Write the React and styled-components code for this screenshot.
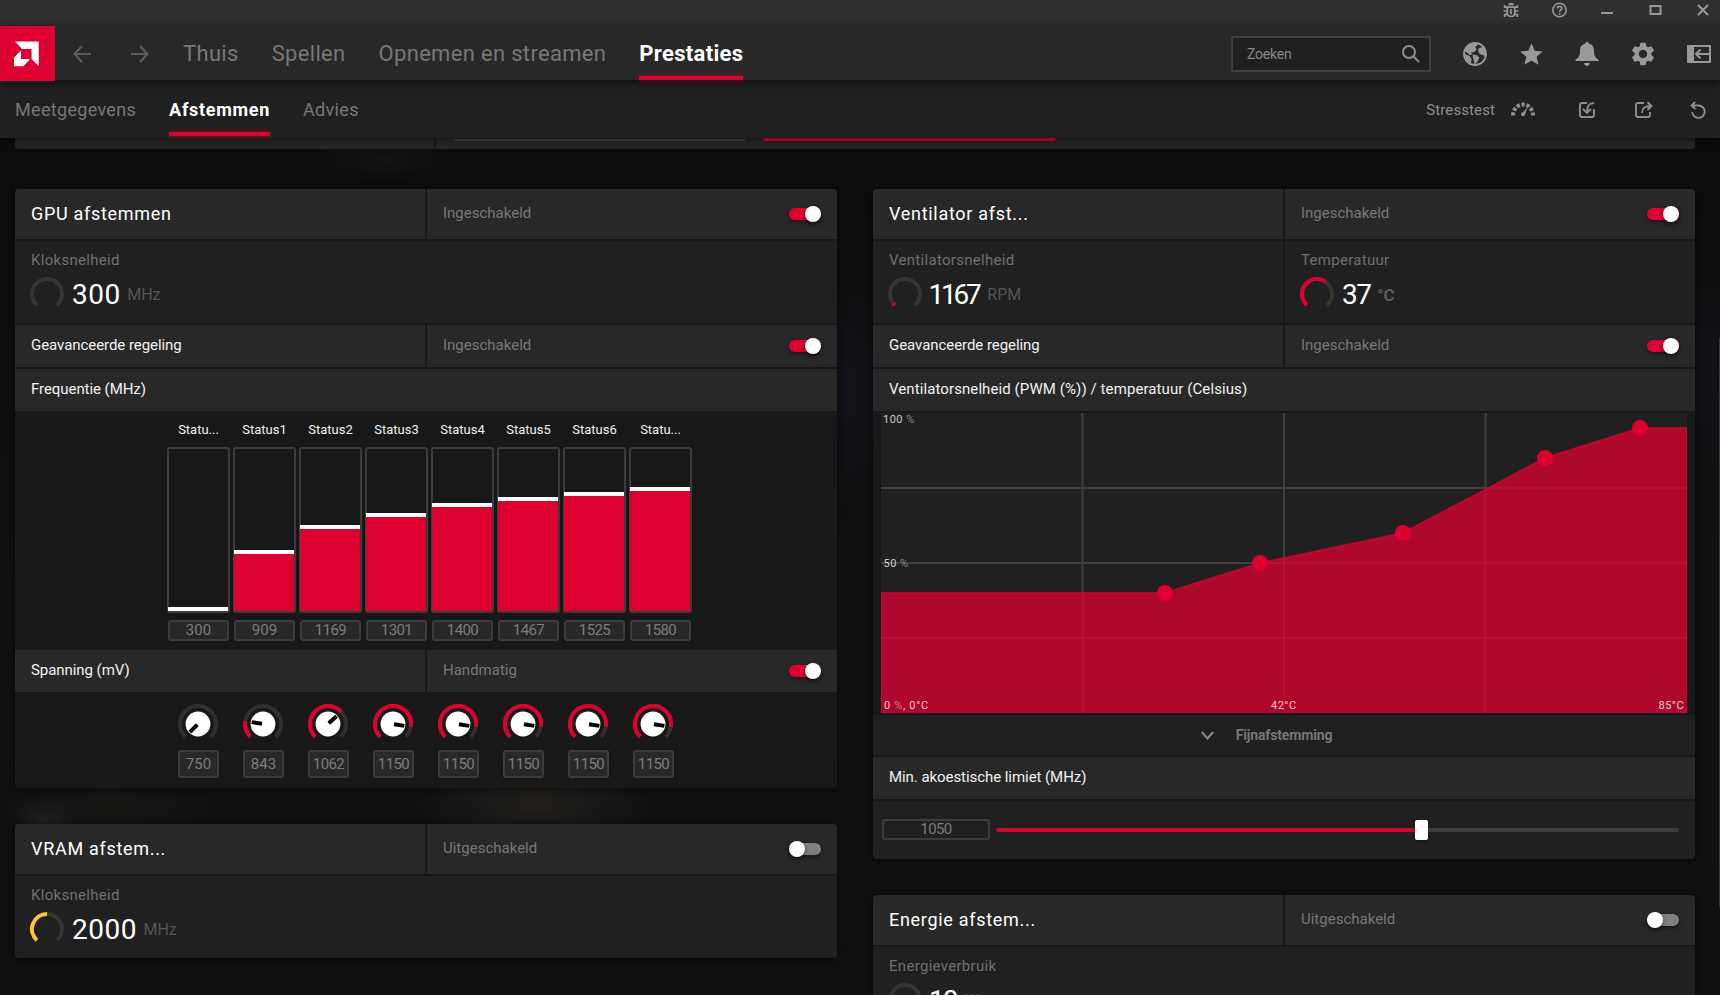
import React, { Component } from 'react';
import styled, { createGlobalStyle } from 'styled-components';
import { MdStar, MdSettings } from 'react-icons/md';

const RED = '#de0031';
const ARC_SWEEP = 270;
const VOLT_MIN = 750;
const VOLT_RANGE = 461;

const frequencies = [
    { label: 'Statu...', value: 300, level: 0 },
    { label: 'Status1', value: 909, level: 57 },
    { label: 'Status2', value: 1169, level: 82 },
    { label: 'Status3', value: 1301, level: 94 },
    { label: 'Status4', value: 1400, level: 104 },
    { label: 'Status5', value: 1467, level: 110 },
    { label: 'Status6', value: 1525, level: 115 },
    { label: 'Statu...', value: 1580, level: 120 },
];
const voltages = [750, 843, 1062, 1150, 1150, 1150, 1150, 1150];
const fanPoints = [[284, 180], [379, 150], [522, 120], [664, 45], [759, 15]];

// point on a circle, angle in degrees clockwise from the top
const polar = (c, r, angle) => {
    const a = (angle * Math.PI) / 180;
    return [c + r * Math.sin(a), c - r * Math.cos(a)];
};
const arcPath = (c, r, from, to) => {
    const [x1, y1] = polar(c, r, from);
    const [x2, y2] = polar(c, r, to);
    return `M${x1} ${y1}A${r} ${r} 0 ${to - from > 180 ? 1 : 0} 1 ${x2} ${y2}`;
};

const Ring = ({ value = 0, color = RED }) => (
    <svg width="34" height="34" fill="none" strokeWidth="4">
        <path d={arcPath(17, 15, -138, 138)} stroke="#353535" />
        {value > 0 && <path d={arcPath(17, 15, -138, -138 + 276 * value)} stroke={color} />}
    </svg>
);

const Knob = ({ value }) => {
    const angle = -135 + (ARC_SWEEP * (value - VOLT_MIN)) / VOLT_RANGE;
    const [x1, y1] = polar(20, 1, angle);
    const [x2, y2] = polar(20, 11.5, angle);
    return (
        <svg width="40" height="36" fill="none" strokeWidth="4">
            <path d={arcPath(20, 18, -135, 135)} stroke="#2f2f2f" />
            {value > VOLT_MIN && <path d={arcPath(20, 18, -135, angle)} stroke={RED} />}
            <circle cx="20" cy="20" r="12.4" fill="#fff" />
            <path d={`M${x1} ${y1}L${x2} ${y2}`} stroke="#000" />
        </svg>
    );
};

const FanChart = () => {
    const line = fanPoints.map((p) => p.join(' ')).join('L');
    return (
        <Chart width="806" height="300" viewBox="0 0 806 300">
            <rect width="806" height="300" fill="#202020" />
            <path d="M201.5 0V300M403 0V300M604.5 0V300M0 75H806M0 150H806M0 225H806" stroke="#404040" strokeWidth="2" />
            <path
                d={`M0 180L${line}L806 15V299.5H0Z`}
                fill="rgba(222, 0, 49, 0.75)"
                stroke="rgba(222, 0, 49, 0.7)"
                strokeWidth="2"
            />
            {fanPoints.map(([x, y]) => <circle key={x} cx={x} cy={y} r="8" fill={RED} />)}
            <text x="2" y="10">100 <tspan className="dim">%</tspan></text>
            <text x="2.5" y="153.5">50 <tspan className="dim">%</tspan></text>
            <text x="3" y="296" letterSpacing="0.7">0 <tspan className="dim">%</tspan>, 0°C</text>
            <text x="390" y="296">42°C</text>
            <text x="777.5" y="296">85°C</text>
        </Chart>
    );
};

const Switch = ({ on }) => <Track $on={on}><Thumb /></Track>;

const CardHead = ({ title, status, on }) => (
    <Split>
        <HeadCell><Title>{title}</Title></HeadCell>
        <HeadCell><Status>{status}</Status><Switch on={on} /></HeadCell>
    </Split>
);

const SubHead = ({ title, status }) => (
    <Split>
        <SubCell><SubTitle>{title}</SubTitle></SubCell>
        <SubCell><Status>{status}</Status><Switch on /></SubCell>
    </Split>
);

const Metric = ({ label, value, unit, ring, color, track = 0.5, nudge = 0, strong }) => (
    <MetricCell>
        <MetricLabel>{label}</MetricLabel>
        <Reading>
            <Ring value={ring} color={color} />
            <Value $track={track} $nudge={nudge}>{value}</Value>
            <Unit $strong={strong}>{unit}</Unit>
        </Reading>
    </MetricCell>
);

export default class App extends Component {
    renderTitleBar() {
        return (
            <TitleBar>
                <svg width="16" height="18" viewBox="0 0 16 18" fill="none" stroke="#999" strokeWidth="1.7">
                    <path d="M5 4.2C5 1 11 1 11 4.2Z" fill="#999" stroke="none" />
                    <path d="M4.3 6.2h7.4v6.2c0 4-7.4 4-7.4 0ZM8 8v5M.5 10h3.5M12 10h3.5M1.6 4v2.2h2.5M14.4 4v2.2h-2.5M1.6 16v-2.3l2.8-.6M14.4 16v-2.3l-2.8-.6" />
                </svg>
                <svg width="15" height="18" viewBox="0.5 0 15 18" fill="none" stroke="#999" strokeWidth="1.6">
                    <circle cx="8" cy="9" r="6.7" />
                    <path d="M5.8 7.6c0-3 4.5-2.8 4.5-.2 0 1.6-2.2 1.6-2.2 3.3M8.1 11.9v1.8" />
                </svg>
                <svg width="16" height="18" fill="none" stroke="#999" strokeWidth="2"><path d="M1 12h12" /></svg>
                <svg width="14" height="18" fill="none" stroke="#999" strokeWidth="2"><path d="M1.5 5h10v8h-10Z" /></svg>
                <svg width="14" height="18" fill="none" stroke="#999" strokeWidth="2"><path d="M2 4l10 10M12 4L2 14" /></svg>
            </TitleBar>
        );
    }
    renderNav() {
        return (
            <NavBar>
                <Logo>
                    <svg width="25" height="26" fill="#fff">
                        <path d="M1 .5H24.7V25L17.5 18V8H8Z" />
                        <path d="M7 9.5V18H16L9.5 25.3H0V16.5Z" />
                    </svg>
                </Logo>
                <History>
                    <svg width="18" height="18" fill="none" stroke="#5c5c5c" strokeWidth="2.2"><path d="M18 9H2M9 1L1.5 9L9 17" /></svg>
                    <svg width="18" height="18" fill="none" stroke="#5c5c5c" strokeWidth="2.2"><path d="M0 9H16M9 1L16.5 9L9 17" /></svg>
                </History>
                <Tabs>
                    <Tab>Thuis</Tab>
                    <Tab>Spellen</Tab>
                    <Tab>Opnemen en streamen</Tab>
                    <Tab $active>Prestaties</Tab>
                </Tabs>
                <Search>
                    Zoeken
                    <svg width="18" height="18" fill="none" stroke="#8e8e8e" strokeWidth="2"><circle cx="7" cy="7" r="6" /><path d="M11.3 11.3L17 17" /></svg>
                </Search>
                <NavIcons>
                    <svg width="24" height="24" fill="currentColor">
                        <circle cx="12" cy="12" r="11" fill="none" stroke="currentColor" strokeWidth="1.8" />
                        <path d="M1.5 9C3 4 7.500 1 12 1l3 2-3 2.200 1.800 2.300-3 2.800-2.800.2 1 2L6.500 13 4 10.500Z" />
                        <path d="M2 12l4.500 2 2 3-.5 4.500C4.500 20 2 16.500 2 12Z" />
                        <path d="M9.500 12.500l4.500.7 2.500 2.600-2.300 4-2.400 3-1-4Z" />
                        <path d="M15.500 6.500L20 4.500l3 5-.4 5.500-2.600-2-3-.8-1.800-2.700Z" />
                    </svg>
                    <MdStar size={27} />
                    <svg width="24" height="24" fill="currentColor">
                        <path d="M12 0c1.3 0 1.8.8 1.9 1.8C18 2.7 19 5.5 19 9c0 5 1.5 6.8 4.5 8.6V19H.5v-1.4C3.5 15.8 5 14 5 9c0-3.5 1-6.3 5.1-7.2C10.2.8 10.7 0 12 0Z" />
                        <path d="M9 21h6c-.4 2-1.5 3-3 3s-2.6-1-3-3Z" />
                    </svg>
                    <MdSettings size={28} />
                    <svg width="24" height="18" fill="none" stroke="currentColor" strokeWidth="2">
                        <path d="M0 0h7v18H0Z" fill="currentColor" stroke="none" />
                        <path d="M1 1h22v16H1ZM23 9H9M13.5 4.5L9 9l4.5 4.5" />
                    </svg>
                </NavIcons>
            </NavBar>
        );
    }
    renderSubNav() {
        return (
            <SubNav>
                <Tabs $small>
                    <Tab $small>Meetgegevens</Tab>
                    <Tab $small $active>Afstemmen</Tab>
                    <Tab $small>Advies</Tab>
                </Tabs>
                <Actions>
                    <Stress>
                        Stresstest
                        <svg width="24" height="16" fill="none" stroke="currentColor">
                            <path d="M2 14.5A10 11 0 0 1 22 14.5" strokeWidth="4" strokeDasharray="3.3 1.65" />
                            <path d="M10.2 13L16.5 6.5L13.7 14.5Z" fill="currentColor" stroke="none" />
                            <circle cx="12" cy="13.2" r="2" fill="currentColor" stroke="none" />
                        </svg>
                    </Stress>
                    <svg width="16" height="18" fill="none" stroke="currentColor" strokeWidth="1.9">
                        <path d="M8 2H3Q1 2 1 4v10q0 2 2 2h10q2 0 2-2V8" />
                        <path d="M15 2C10 2 8 4.5 8 11.500M4 8l4 4 4-4" />
                    </svg>
                    <svg width="18" height="18" fill="none" stroke="currentColor" strokeWidth="1.9">
                        <path d="M9 2H3Q1 2 1 4v10q0 2 2 2h10q2 0 2-2v-3" />
                        <path d="M7 12C7 7.5 9 5 16 5M12.5 1.2L16.5 5l-4 4" />
                    </svg>
                    <svg width="16" height="18" fill="none" stroke="currentColor" strokeWidth="1.9">
                        <path d="M1.5 4.5H8.5A6.2 6.2 0 1 1 2.3 11M5.2 .8L1.5 4.5L5.2 8.2" />
                    </svg>
                </Actions>
            </SubNav>
        );
    }
    renderGpu() {
        return (
            <Card>
                <CardHead title="GPU afstemmen" status="Ingeschakeld" on />
                <Metric label="Kloksnelheid" value="300" unit="MHz" />
                <SubHead title="Geavanceerde regeling" status="Ingeschakeld" />
                <SubCell><SubTitle>Frequentie (MHz)</SubTitle></SubCell>
                <Bars>
                    {frequencies.map((f) => (
                        <BarColumn key={f.value}>
                            <BarLabel>{f.label}</BarLabel>
                            <BarFrame><Bar style={{ height: f.level }} /></BarFrame>
                            <Field $narrow={String(f.value).startsWith('1')}>{f.value}</Field>
                        </BarColumn>
                    ))}
                </Bars>
                <SubHead title="Spanning (mV)" status="Handmatig" />
                <Knobs>
                    {voltages.map((v, i) => (
                        <KnobColumn key={i}>
                            <Knob value={v} />
                            <KnobField $narrow={v > 1000}>{v}</KnobField>
                        </KnobColumn>
                    ))}
                </Knobs>
            </Card>
        );
    }
    renderFan() {
        return (
            <Card>
                <CardHead title="Ventilator afst..." status="Ingeschakeld" on />
                <Split>
                    <Metric label="Ventilatorsnelheid" value="1167" unit="RPM" ring={0.03} track={-3.2} nudge={1.5} />
                    <Metric label="Temperatuur" value="37" unit="°C" ring={0.63} track={-1.5} strong />
                </Split>
                <SubHead title="Geavanceerde regeling" status="Ingeschakeld" />
                <SubCell><SubTitle $wide>Ventilatorsnelheid (PWM (%)) / temperatuur (Celsius)</SubTitle></SubCell>
                <FanChart />
                <FineTune>
                    <svg width="13" height="9" fill="none" stroke="#8a8a8a" strokeWidth="2"><path d="M.8 1L6.5 7.5L12.2 1" /></svg>
                    Fijnafstemming
                </FineTune>
                <SubCell><SubTitle>Min. akoestische limiet (MHz)</SubTitle></SubCell>
                <SliderRow>
                    <SliderField $narrow>1050</SliderField>
                    <Slider>
                        <SliderFill />
                        <SliderThumb />
                        <SliderRest />
                    </Slider>
                </SliderRow>
            </Card>
        );
    }
    render() {
        return (
            <Page>
                <GlobalStyle />
                {this.renderTitleBar()}
                {this.renderNav()}
                {this.renderSubNav()}
                <Main>
                    <Profile>
                        <ProfileCell />
                        <ProfileCell>
                            <Preset />
                            <Preset $active />
                        </ProfileCell>
                    </Profile>
                    <Columns>
                        <Column>
                            {this.renderGpu()}
                            <Card>
                                <CardHead title="VRAM afstem..." status="Uitgeschakeld" />
                                <Metric label="Kloksnelheid" value="2000" unit="MHz" ring={0.5} color="#ffc72c" />
                            </Card>
                        </Column>
                        <Column>
                            {this.renderFan()}
                            <Card>
                                <CardHead title="Energie afstem..." status="Uitgeschakeld" />
                                <Metric label="Energieverbruik" value="10" unit="W" track={-2} nudge={1} />
                            </Card>
                        </Column>
                    </Columns>
                </Main>
                <ScrollThumb />
            </Page>
        );
    }
}

const GlobalStyle = createGlobalStyle`
    * {
        box-sizing: border-box;
    }
    body {
        margin: 0;
        background: #0d0d0d;
        font-family: Roboto, "Liberation Sans", sans-serif;
    }
    svg {
        display: block;
        flex: none;
    }
`;
const Page = styled.div`
    position: relative;
    width: 1720px;
    height: 995px;
    overflow: hidden;
    display: flex;
    flex-direction: column;
    background:
        radial-gradient(ellipse 34px 20px at 45px 820px, #202020, transparent),
        radial-gradient(ellipse 110px 30px at 110px 806px, #191714, transparent),
        radial-gradient(ellipse 120px 55px at 535px 800px, #221f1b, transparent),
        radial-gradient(ellipse 80px 20px at 385px 160px, #141414, transparent),
        radial-gradient(ellipse 60px 120px at 850px 390px, #12141a, transparent),
        radial-gradient(ellipse 40px 120px at 1710px 370px, #111318, transparent),
        linear-gradient(#0c0c0c 15%, #101112 60%, #0f1012);
`;
const TitleBar = styled.div`
    flex: none;
    height: 26px;
    padding: 1px 10px 0 0;
    display: flex;
    justify-content: flex-end;
    gap: 33px;
    background: linear-gradient(#2e2e2e, #313131);
`;
const NavBar = styled.div`
    position: relative;
    z-index: 2;
    flex: none;
    height: 54px;
    display: flex;
    align-items: center;
    background: #282828;
    box-shadow: 0 2px 9px rgba(0, 0, 0, 0.65);
`;
const Logo = styled.div`
    align-self: flex-start;
    width: 55px;
    height: 55px;
    display: flex;
    align-items: center;
    justify-content: center;
    padding-right: 3px;
    background: ${RED};
`;
const History = styled.div`
    display: flex;
    gap: 40px;
    width: 128px;
    padding: 2px 0 0 18px;
`;
const Tabs = styled.div`
    display: flex;
    align-self: stretch;
    gap: 33px;
    margin-left: ${props => props.$small ? "15px" : "0"};
`;
const Tab = styled.div`
    display: flex;
    align-items: center;
    padding-top: ${props => props.$small ? "0" : "1px"};
    font-size: ${props => props.$small ? "18px" : "22px"};
    font-weight: ${props => props.$active ? 700 : 400};
    letter-spacing: ${props => props.$small && props.$active ? "0.7px" : "0.32px"};
    color: ${props => props.$active ? "#fff" : "#777"};
    position: relative;
    white-space: nowrap;
    &::after {
        content: "";
        display: ${props => props.$active ? "block" : "none"};
        position: absolute;
        left: 0;
        right: 0;
        bottom: ${props => props.$small ? "2px" : "0"};
        height: 4px;
        background: ${RED};
        box-shadow: 0 0 5px rgba(222, 0, 49, 0.6);
    }
`;
const Search = styled.div`
    width: 200px;
    height: 36px;
    margin: 2px 0 0 auto;
    padding: 0 9px 0 14px;
    display: flex;
    align-items: center;
    justify-content: space-between;
    border: 2px solid #404040;
    border-radius: 2px;
    background: #202020;
    color: #858585;
    font-size: 14px;
    letter-spacing: -0.2px;
`;
const NavIcons = styled.div`
    display: grid;
    grid-template-columns: repeat(5, 56px);
    place-items: center;
    padding-top: 2px;
    margin: 0 -7px 0 16px;
    color: #999;
`;
const SubNav = styled.div`
    position: relative;
    z-index: 1;
    flex: none;
    height: 58px;
    padding-right: 14px;
    display: flex;
    justify-content: space-between;
    background: #202020;
    box-shadow: 0 2px 8px rgba(0, 0, 0, 0.5);
`;
const Actions = styled.div`
    display: flex;
    align-items: center;
    gap: 40px;
    color: #8e8e8e;
    padding-top: 1px;
    & > svg:last-child {
        margin-left: -3px;
    }
`;
const Stress = styled.div`
    display: flex;
    align-items: center;
    gap: 16px;
    margin-right: 4px;
    color: #8e8e8e;
    font-size: 15px;
    letter-spacing: 0.1px;
    svg {
        margin-top: -2px;
    }
`;
const Main = styled.div`
    flex: 1;
    min-height: 0;
    padding: 0 25px 0 15px;
    overflow: hidden;
`;
const Profile = styled.div`
    height: 11px;
    display: grid;
    grid-template-columns: 419px 1fr;
    gap: 2px;
    margin-bottom: 40px;
    border-radius: 0 0 4px 4px;
    overflow: hidden;
    background: #191919;
`;
const ProfileCell = styled.div`
    display: flex;
    gap: 17px;
    padding-left: 17px;
    background: #262626;
`;
const Preset = styled.div`
    width: 293px;
    height: 3px;
    border-radius: 0 0 3px 3px;
    border-bottom: 2px solid ${props => props.$active ? RED : "#3c3c3c"};
    background: ${props => props.$active ? RED : "#202020"};
`;
const Columns = styled.div`
    display: grid;
    grid-template-columns: 822px 822px;
    gap: 36px;
    align-items: start;
`;
const Column = styled.div`
    display: flex;
    flex-direction: column;
    gap: 36px;
`;
const Card = styled.section`
    display: flex;
    flex-direction: column;
    gap: 2px;
    border-radius: 4px;
    overflow: hidden;
    background: #181818;
    box-shadow: 0 1px 8px rgba(0, 0, 0, 0.6);
`;
const Split = styled.div`
    display: grid;
    grid-template-columns: 1fr 1fr;
    gap: 2px;
`;
const HeadCell = styled.div`
    height: 50px;
    padding: 0 16px;
    display: flex;
    align-items: center;
    justify-content: space-between;
    background: #282828;
`;
const SubCell = styled(HeadCell)`
    height: 42px;
`;
const Title = styled.h2`
    margin: -2px 0 0;
    font-size: 18px;
    font-weight: 400;
    letter-spacing: 0.7px;
    color: #fff;
`;
const SubTitle = styled.h3`
    margin: -2px 0 0;
    font-size: 15px;
    font-weight: 400;
    letter-spacing: ${props => props.$wide ? "0.09px" : "-0.06px"};
    color: #f2f2f2;
`;
const Status = styled.span`
    margin-top: -2px;
    font-size: 15px;
    color: #777;
`;
const Track = styled.div`
    width: 32px;
    height: 12px;
    border-radius: 6px;
    display: flex;
    align-items: center;
    justify-content: ${props => props.$on ? "flex-end" : "flex-start"};
    background: ${props => props.$on ? RED : "#808080"};
    box-shadow: 0 2px 4px rgba(0, 0, 0, 0.4);
`;
const Thumb = styled.div`
    width: 16px;
    height: 16px;
    flex: none;
    border-radius: 50%;
    background: #fff;
    box-shadow: 0 2px 4px rgba(0, 0, 0, 0.5);
`;
const MetricCell = styled.div`
    height: 82px;
    padding: 10px 15px 0;
    background: #202020;
`;
const MetricLabel = styled.div`
    padding-left: 1px;
    font-size: 15px;
    line-height: 18px;
    letter-spacing: 0.3px;
    color: #6f6f6f;
`;
const Reading = styled.div`
    display: flex;
    align-items: center;
    height: 34px;
    margin-top: 8px;
`;
const Value = styled.div`
    margin-left: ${props => 8 - props.$nudge}px;
    margin-right: ${props => 7 - props.$track - props.$nudge}px;
    font-size: 28px;
    letter-spacing: ${props => props.$track}px;
    color: #fff;
`;
const Unit = styled.div`
    padding-top: 1px;
    margin-left: ${props => props.$strong ? "-2px" : "0"};
    font-size: ${props => props.$strong ? "17px" : "16px"};
    font-weight: ${props => props.$strong ? 700 : 400};
    color: ${props => props.$strong ? "#5c5c5c" : "#555"};
`;
const Bars = styled.div`
    height: 235px;
    padding: 9px 0 0 152px;
    display: flex;
    gap: 3px;
`;
const BarColumn = styled.div`
    width: 63px;
    display: flex;
    flex-direction: column;
    align-items: center;
`;
const BarLabel = styled.div`
    height: 25px;
    font-size: 13px;
    line-height: 16px;
    color: #f2f2f2;
`;
const BarFrame = styled.div`
    width: 63px;
    height: 166px;
    padding: 0 2px 2px 1px;
    display: flex;
    flex-direction: column;
    justify-content: flex-end;
    border-radius: 3px;
    box-shadow: inset 0 0 0 2px #3c3c3c;
`;
const Bar = styled.div`
    box-sizing: content-box;
    border-top: 4px solid #fff;
    background: ${RED};
`;
const Field = styled.div`
    width: 61px;
    height: 21px;
    margin-top: 7px;
    padding-bottom: 1px;
    display: flex;
    align-items: center;
    justify-content: center;
    border: 2px solid #3c3c3c;
    border-radius: 3px;
    background: #282828;
    color: #7c7c7c;
    font-size: 15px;
    letter-spacing: ${props => props.$narrow ? "-0.6px" : "0"};
`;
const Knobs = styled.div`
    height: 94px;
    padding: 10px 0 0 163px;
    display: flex;
    gap: 25px;
`;
const KnobColumn = styled.div`
    width: 40px;
`;
const KnobField = styled(Field)`
    width: 41px;
    height: 28px;
    margin-top: 10px;
`;
const Chart = styled.svg`
    margin: 0 8px;
    font-size: 11px;
    letter-spacing: 0.5px;
    text {
        fill: rgba(255, 255, 255, 0.78);
    }
    .dim {
        fill: rgba(255, 255, 255, 0.45);
    }
`;
const FineTune = styled.div`
    height: 40px;
    padding-right: 35px;
    display: flex;
    align-items: center;
    justify-content: center;
    gap: 22px;
    background: #202020;
    color: #757575;
    font-size: 14px;
    font-weight: 700;
    letter-spacing: -0.15px;
`;
const SliderRow = styled.div`
    height: 58px;
    padding: 0 16px 0 9px;
    display: flex;
    align-items: center;
    gap: 6px;
    background: #202020;
`;
const SliderField = styled(Field)`
    width: 108px;
    margin-top: -1px;
    background: #202020;
`;
const Slider = styled.div`
    flex: 1;
    display: flex;
    align-items: center;
`;
const SliderFill = styled.div`
    width: 419px;
    height: 4px;
    border-radius: 2px 0 0 2px;
    background: ${RED};
`;
const SliderThumb = styled.div`
    width: 13px;
    height: 20px;
    border-radius: 2px;
    background: #fff;
    box-shadow: 0 1px 4px rgba(0, 0, 0, 0.5);
`;
const SliderRest = styled.div`
    flex: 1;
    height: 4px;
    border-radius: 0 2px 2px 0;
    background: #3e3e3e;
`;
const ScrollThumb = styled.div`
    position: absolute;
    top: 338px;
    right: 0;
    width: 1px;
    height: 569px;
    background: #363636;
`;
